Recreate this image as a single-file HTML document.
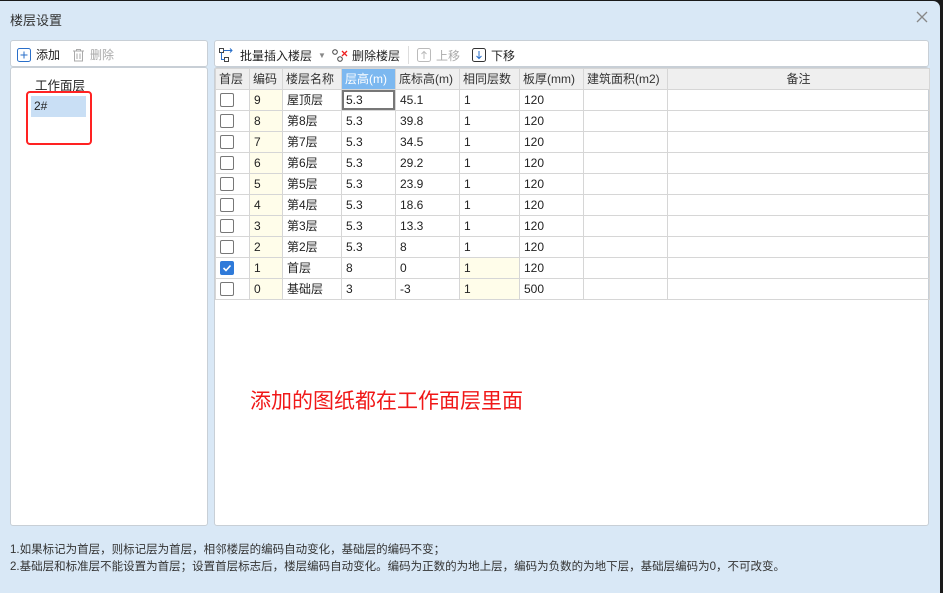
<!DOCTYPE html>
<html><head><meta charset="utf-8"><style>
*{box-sizing:border-box;margin:0;padding:0}
body{width:943px;height:593px;background:#1a1a1a;position:relative;overflow:hidden;font-family:"Liberation Sans","Noto Sans CJK SC",sans-serif;font-size:12px;color:#222}
.dlg{position:absolute;left:0;top:1px;width:940px;height:592px;background:#d9e8f6;border-top-right-radius:7px}
.title{position:absolute;left:10px;top:9px;font-size:13px;color:#333}
.close{position:absolute;left:914px;top:8px;width:16px;height:16px}
.panel{position:absolute;background:#fff;border:1px solid #c8cfd6;border-radius:3px}
.tb{position:absolute;display:flex;align-items:center;font-size:12px}
.tb span{display:inline-flex;align-items:center}
.dis{color:#aaa}
table{border-collapse:collapse;position:absolute;left:215px;top:67px;table-layout:fixed}
td,th{border:1px solid #d6d6d6;height:21px;line-height:19px;padding:0 4px;font-weight:normal;text-align:left;white-space:nowrap;overflow:hidden;font-size:12px}
th{background:#efefef;color:#333;padding:0 3px}
.y{background:#fffdea}
.cb{display:inline-block;width:14px;height:14px;border:1px solid #777;border-radius:2px;background:#fff;vertical-align:middle}
.ck{background:#2f7ad9;border-color:#2f7ad9;position:relative}
.note{position:absolute;left:10px;font-size:11.5px;color:#333}
</style></head><body>
<div class="dlg">
<div class="title">楼层设置</div>
<svg class="close" viewBox="0 0 16 16"><path d="M3 3L13 13M13 3L3 13" stroke="#888" stroke-width="1.3"/></svg>

<div class="panel" style="left:10px;top:39px;width:198px;height:27px"></div>
<div class="tb" style="left:17px;top:45px">
<svg width="14" height="14" viewBox="0 0 14 14"><rect x="0.5" y="0.5" width="13" height="13" rx="2" fill="none" stroke="#2a6fc9"/><path d="M7 3.5V10.5M3.5 7H10.5" stroke="#2a6fc9"/></svg>
<span style="margin-left:5px">添加</span>
<svg style="margin-left:12px" width="13" height="14" viewBox="0 0 13 14"><path d="M1 3H12M4.5 3V1.5H8.5V3M2.5 3V13H10.5V3M5 5.5V11M8 5.5V11" fill="none" stroke="#aaa"/></svg>
<span class="dis" style="margin-left:5px">删除</span>
</div>
<div class="panel" style="left:10px;top:66px;width:198px;height:459px"></div>
<div style="position:absolute;left:35px;top:74px;font-size:12.5px">工作面层</div>
<div style="position:absolute;left:31px;top:95px;width:55px;height:21px;background:#c9dff5;padding:3px 3px;font-size:12px">2#</div>
<div style="position:absolute;left:26px;top:90px;width:66px;height:54px;border:2px solid #f22;border-radius:4px"></div>

<div class="panel" style="left:214px;top:39px;width:715px;height:27px"></div>
<div class="tb" style="left:219px;top:45px">
<svg width="16" height="14" viewBox="0 0 16 14"><rect x="0.5" y="0.5" width="4" height="4" fill="none" stroke="#444"/><rect x="5.5" y="9.5" width="4" height="4" fill="none" stroke="#444"/><path d="M2.5 4.5V11.5H5.5M4.5 2.5H13M11 0.5L13 2.5 11 4.5" fill="none" stroke="#2a6fc9"/></svg>
<span style="margin-left:5px">批量插入楼层</span>
<span style="margin-left:6px;color:#888;font-size:8px">▼</span>
<svg style="margin-left:6px" width="16" height="14" viewBox="0 0 16 14"><circle cx="3" cy="4" r="2.3" fill="none" stroke="#444"/><circle cx="8" cy="11" r="2.3" fill="none" stroke="#444"/><path d="M10 3L15 8M15 3L10 8" stroke="#e22" stroke-width="1.3"/></svg>
<span style="margin-left:4px">删除楼层</span>
<span style="margin-left:8px;width:1px;height:18px;background:#ddd"></span>
<svg style="margin-left:8px" width="14" height="14" viewBox="0 0 14 14"><rect x="0.5" y="0.5" width="13" height="13" rx="2" fill="none" stroke="#bbb"/><path d="M7 11V3.5M4.5 6L7 3.5 9.5 6" fill="none" stroke="#bbb"/></svg>
<span class="dis" style="margin-left:5px">上移</span>
<svg style="margin-left:12px" width="14" height="14" viewBox="0 0 14 14"><rect x="0.5" y="0.5" width="13" height="13" rx="2" fill="none" stroke="#333"/><path d="M7 3V10.5M4.5 8L7 10.5 9.5 8" fill="none" stroke="#2a6fc9"/></svg>
<span style="margin-left:5px">下移</span>
</div>
<div class="panel" style="left:214px;top:66px;width:715px;height:459px"></div>
<table>
<colgroup><col style="width:34px"><col style="width:33px"><col style="width:59px"><col style="width:54px"><col style="width:64px"><col style="width:60px"><col style="width:64px"><col style="width:84px"><col style="width:262px"></colgroup>
<tr><th>首层</th><th>编码</th><th>楼层名称</th><th style="background:#7cb8f0;color:#fff">层高(m)</th><th>底标高(m)</th><th>相同层数</th><th>板厚(mm)</th><th>建筑面积(m2)</th><th style="text-align:center">备注</th></tr>
<tr><td><span class="cb"></span></td><td class="y">9</td><td>屋顶层</td><td style="box-shadow:inset 0 0 0 2px #777">5.3</td><td>45.1</td><td>1</td><td>120</td><td></td><td></td></tr>
<tr><td><span class="cb"></span></td><td class="y">8</td><td>第8层</td><td>5.3</td><td>39.8</td><td>1</td><td>120</td><td></td><td></td></tr>
<tr><td><span class="cb"></span></td><td class="y">7</td><td>第7层</td><td>5.3</td><td>34.5</td><td>1</td><td>120</td><td></td><td></td></tr>
<tr><td><span class="cb"></span></td><td class="y">6</td><td>第6层</td><td>5.3</td><td>29.2</td><td>1</td><td>120</td><td></td><td></td></tr>
<tr><td><span class="cb"></span></td><td class="y">5</td><td>第5层</td><td>5.3</td><td>23.9</td><td>1</td><td>120</td><td></td><td></td></tr>
<tr><td><span class="cb"></span></td><td class="y">4</td><td>第4层</td><td>5.3</td><td>18.6</td><td>1</td><td>120</td><td></td><td></td></tr>
<tr><td><span class="cb"></span></td><td class="y">3</td><td>第3层</td><td>5.3</td><td>13.3</td><td>1</td><td>120</td><td></td><td></td></tr>
<tr><td><span class="cb"></span></td><td class="y">2</td><td>第2层</td><td>5.3</td><td>8</td><td>1</td><td>120</td><td></td><td></td></tr>
<tr><td><span class="cb ck"><svg width="12" height="12" viewBox="0 0 12 12" style="position:absolute;left:0;top:0"><path d="M2.5 6L5 8.5 9.5 3.5" fill="none" stroke="#fff" stroke-width="1.6"/></svg></span></td><td class="y">1</td><td>首层</td><td>8</td><td>0</td><td class="y">1</td><td>120</td><td></td><td></td></tr>
<tr><td><span class="cb"></span></td><td class="y">0</td><td>基础层</td><td>3</td><td>-3</td><td class="y">1</td><td>500</td><td></td><td></td></tr>
</table>
<div style="position:absolute;left:250px;top:384px;font-size:21px;color:#f01818">添加的图纸都在工作面层里面</div>
<div class="note" style="top:540px">1.如果标记为首层，则标记层为首层，相邻楼层的编码自动变化，基础层的编码不变；</div>
<div class="note" style="top:557px">2.基础层和标准层不能设置为首层；设置首层标志后，楼层编码自动变化。编码为正数的为地上层，编码为负数的为地下层，基础层编码为0，不可改变。</div>
</div>
</body></html>
